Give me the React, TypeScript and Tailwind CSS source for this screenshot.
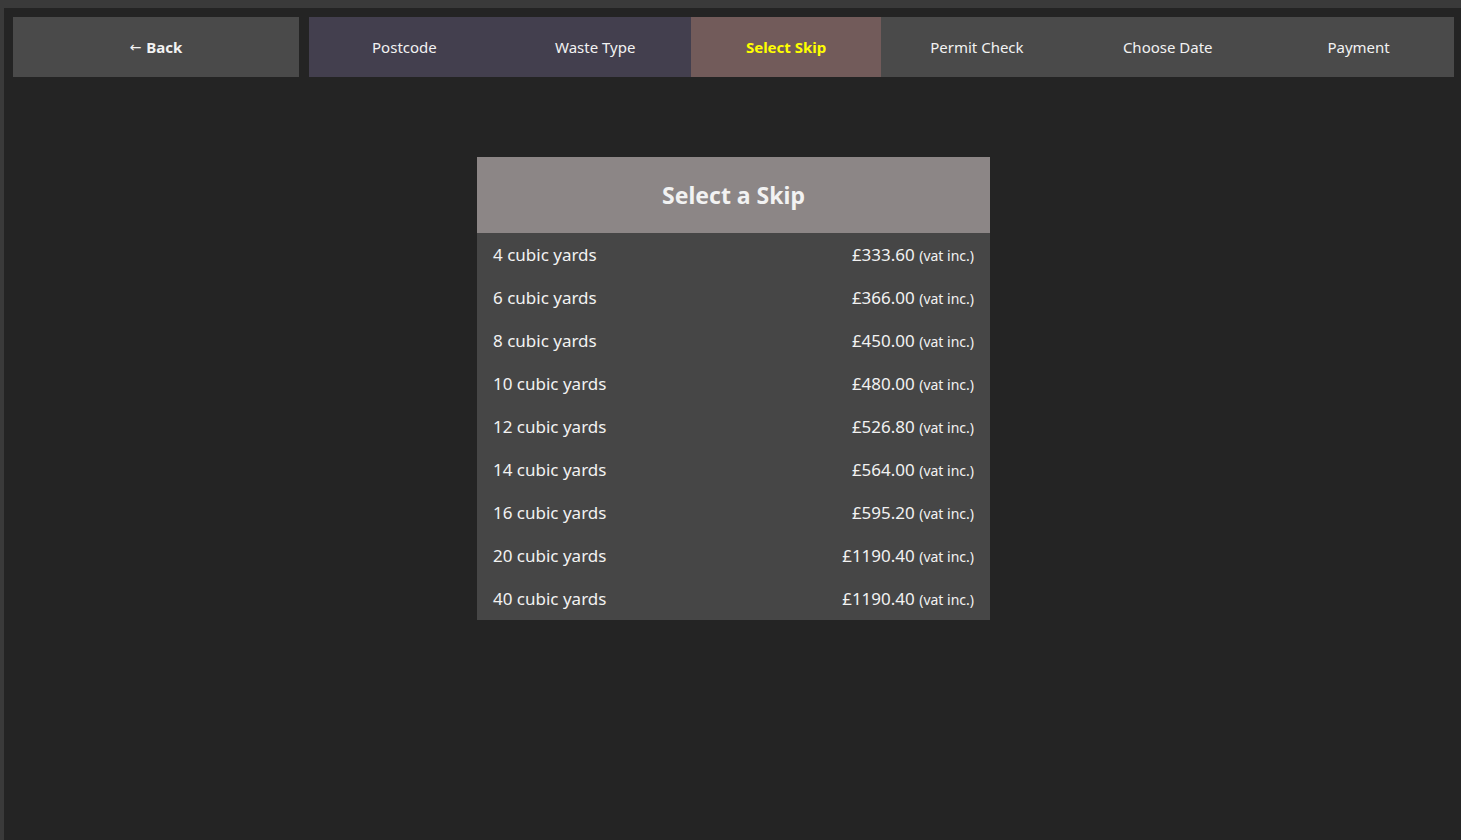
import React from "react";

const tabs = [
  { label: "Postcode", cls: "bg-[#433f4e] text-[#f2f2f2] font-normal" },
  { label: "Waste Type", cls: "bg-[#433f4e] text-[#f2f2f2] font-normal" },
  { label: "Select Skip", cls: "bg-[#725b5a] text-[#ffff00] font-bold" },
  { label: "Permit Check", cls: "bg-[#4a4a4a] text-[#f2f2f2] font-normal" },
  { label: "Choose Date", cls: "bg-[#4a4a4a] text-[#f2f2f2] font-normal" },
  { label: "Payment", cls: "bg-[#4a4a4a] text-[#f2f2f2] font-normal" },
];

const skips = [
  ["4 cubic yards", "£333.60"],
  ["6 cubic yards", "£366.00"],
  ["8 cubic yards", "£450.00"],
  ["10 cubic yards", "£480.00"],
  ["12 cubic yards", "£526.80"],
  ["14 cubic yards", "£564.00"],
  ["16 cubic yards", "£595.20"],
  ["20 cubic yards", "£1190.40"],
  ["40 cubic yards", "£1190.40"],
];

export default function App() {
  return (
    <div
      className="w-full h-[840px] bg-[#3a3a3a] pt-[8px] pl-[4px] overflow-hidden"
      style={{ fontFamily: '"Noto Sans", "Open Sans", sans-serif' }}
    >
      <div className="h-full bg-[#242424] pt-[9px] pl-[9px] pr-[7px]">
        <div className="flex h-[60px] gap-[10px]">
          <button className="w-[286px] bg-[#4a4a4a] text-[#f2f2f2] text-[15px] font-bold flex items-center justify-center gap-[5px]">
            <span className="font-normal text-[14px]" style={{ fontFamily: '"DejaVu Sans", sans-serif' }}>←</span>
            <span>Back</span>
          </button>
          <div className="flex-1 grid grid-cols-6">
            {tabs.map((t) => (
              <div
                key={t.label}
                className={`flex items-center justify-center text-[15px] ${t.cls}`}
              >
                {t.label}
              </div>
            ))}
          </div>
        </div>
        <div className="flex justify-center mt-[80px]">
          <div className="w-[513px]">
            <div className="h-[76px] bg-[#8c8686] flex items-center justify-center text-[#f2f2f2] text-[23px] font-bold">
              Select a Skip
            </div>
            <div className="bg-[#464646]">
              {skips.map(([size, price]) => (
                <div
                  key={size}
                  className="h-[43px] flex items-center justify-between px-[16px] text-[#f2f2f2]"
                >
                  <span className="text-[17px]">{size}</span>
                  <span className="text-[17px]">
                    {price} <span className="text-[14px]">(vat inc.)</span>
                  </span>
                </div>
              ))}
            </div>
          </div>
        </div>
      </div>
    </div>
  );
}
